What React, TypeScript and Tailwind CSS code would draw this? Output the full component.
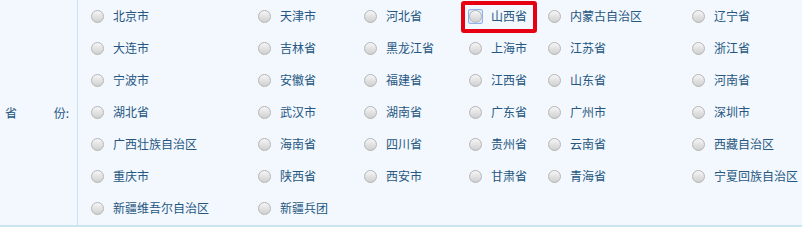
import React from "react";

const rows: string[][] = [
  ["北京市", "天津市", "河北省", "山西省", "内蒙古自治区", "辽宁省"],
  ["大连市", "吉林省", "黑龙江省", "上海市", "江苏省", "浙江省"],
  ["宁波市", "安徽省", "福建省", "江西省", "山东省", "河南省"],
  ["湖北省", "武汉市", "湖南省", "广东省", "广州市", "深圳市"],
  ["广西壮族自治区", "海南省", "四川省", "贵州省", "云南省", "西藏自治区"],
  ["重庆市", "陕西省", "西安市", "甘肃省", "青海省", "宁夏回族自治区"],
  ["新疆维吾尔自治区", "新疆兵团"],
];

const Radio = ({ focused }: { focused?: boolean }) => (
  <span
    className={
      focused
        ? "flex h-[15px] w-[15px] shrink-0 items-center justify-center rounded-[2px] border border-[#8fb2ea] bg-[#dce8fb] -ml-[1px] -mr-[1px]"
        : "flex h-[13px] w-[13px] shrink-0 items-center justify-center"
    }
  >
    <span className="block h-[13px] w-[13px] rounded-full border border-[#b5b5b5] bg-gradient-to-b from-[#f6f6f6] to-[#cfcfcf]" />
  </span>
);

const Item = ({ name }: { name: string }) => {
  const picked = name === "山西省";
  return (
    <label className="relative flex h-[32px] items-center gap-[9px] cursor-pointer">
      <Radio focused={picked} />
      <span>{name}</span>
      {picked && (
        <span className="pointer-events-none absolute left-[-8px] top-[1px] h-[32px] w-[76px] rounded-[3px] border-4 border-[#e60012]" />
      )}
    </label>
  );
};

export default function App() {
  return (
    <div
      className="flex h-[227px] w-[802px] bg-[#f2f8fd] text-[12px] text-[#265682] border-b-2 border-[#cbe6f2]"
      style={{ fontFamily: '"Noto Sans CJK SC", "Noto Sans", sans-serif' }}
    >
      <div className="flex w-[78px] shrink-0 items-center justify-between border-r border-[#c8e2ee] pl-[5px] pr-[8px]">
        <span>省</span>
        <span>份:</span>
      </div>
      <div className="flex-1 pl-[13px]">
        {rows.map((row, i) => (
          <div
            key={i}
            className="grid grid-cols-[167px_106px_105px_79px_144px_1fr]"
          >
            {row.map((name) => (
              <Item key={name} name={name} />
            ))}
          </div>
        ))}
      </div>
    </div>
  );
}
